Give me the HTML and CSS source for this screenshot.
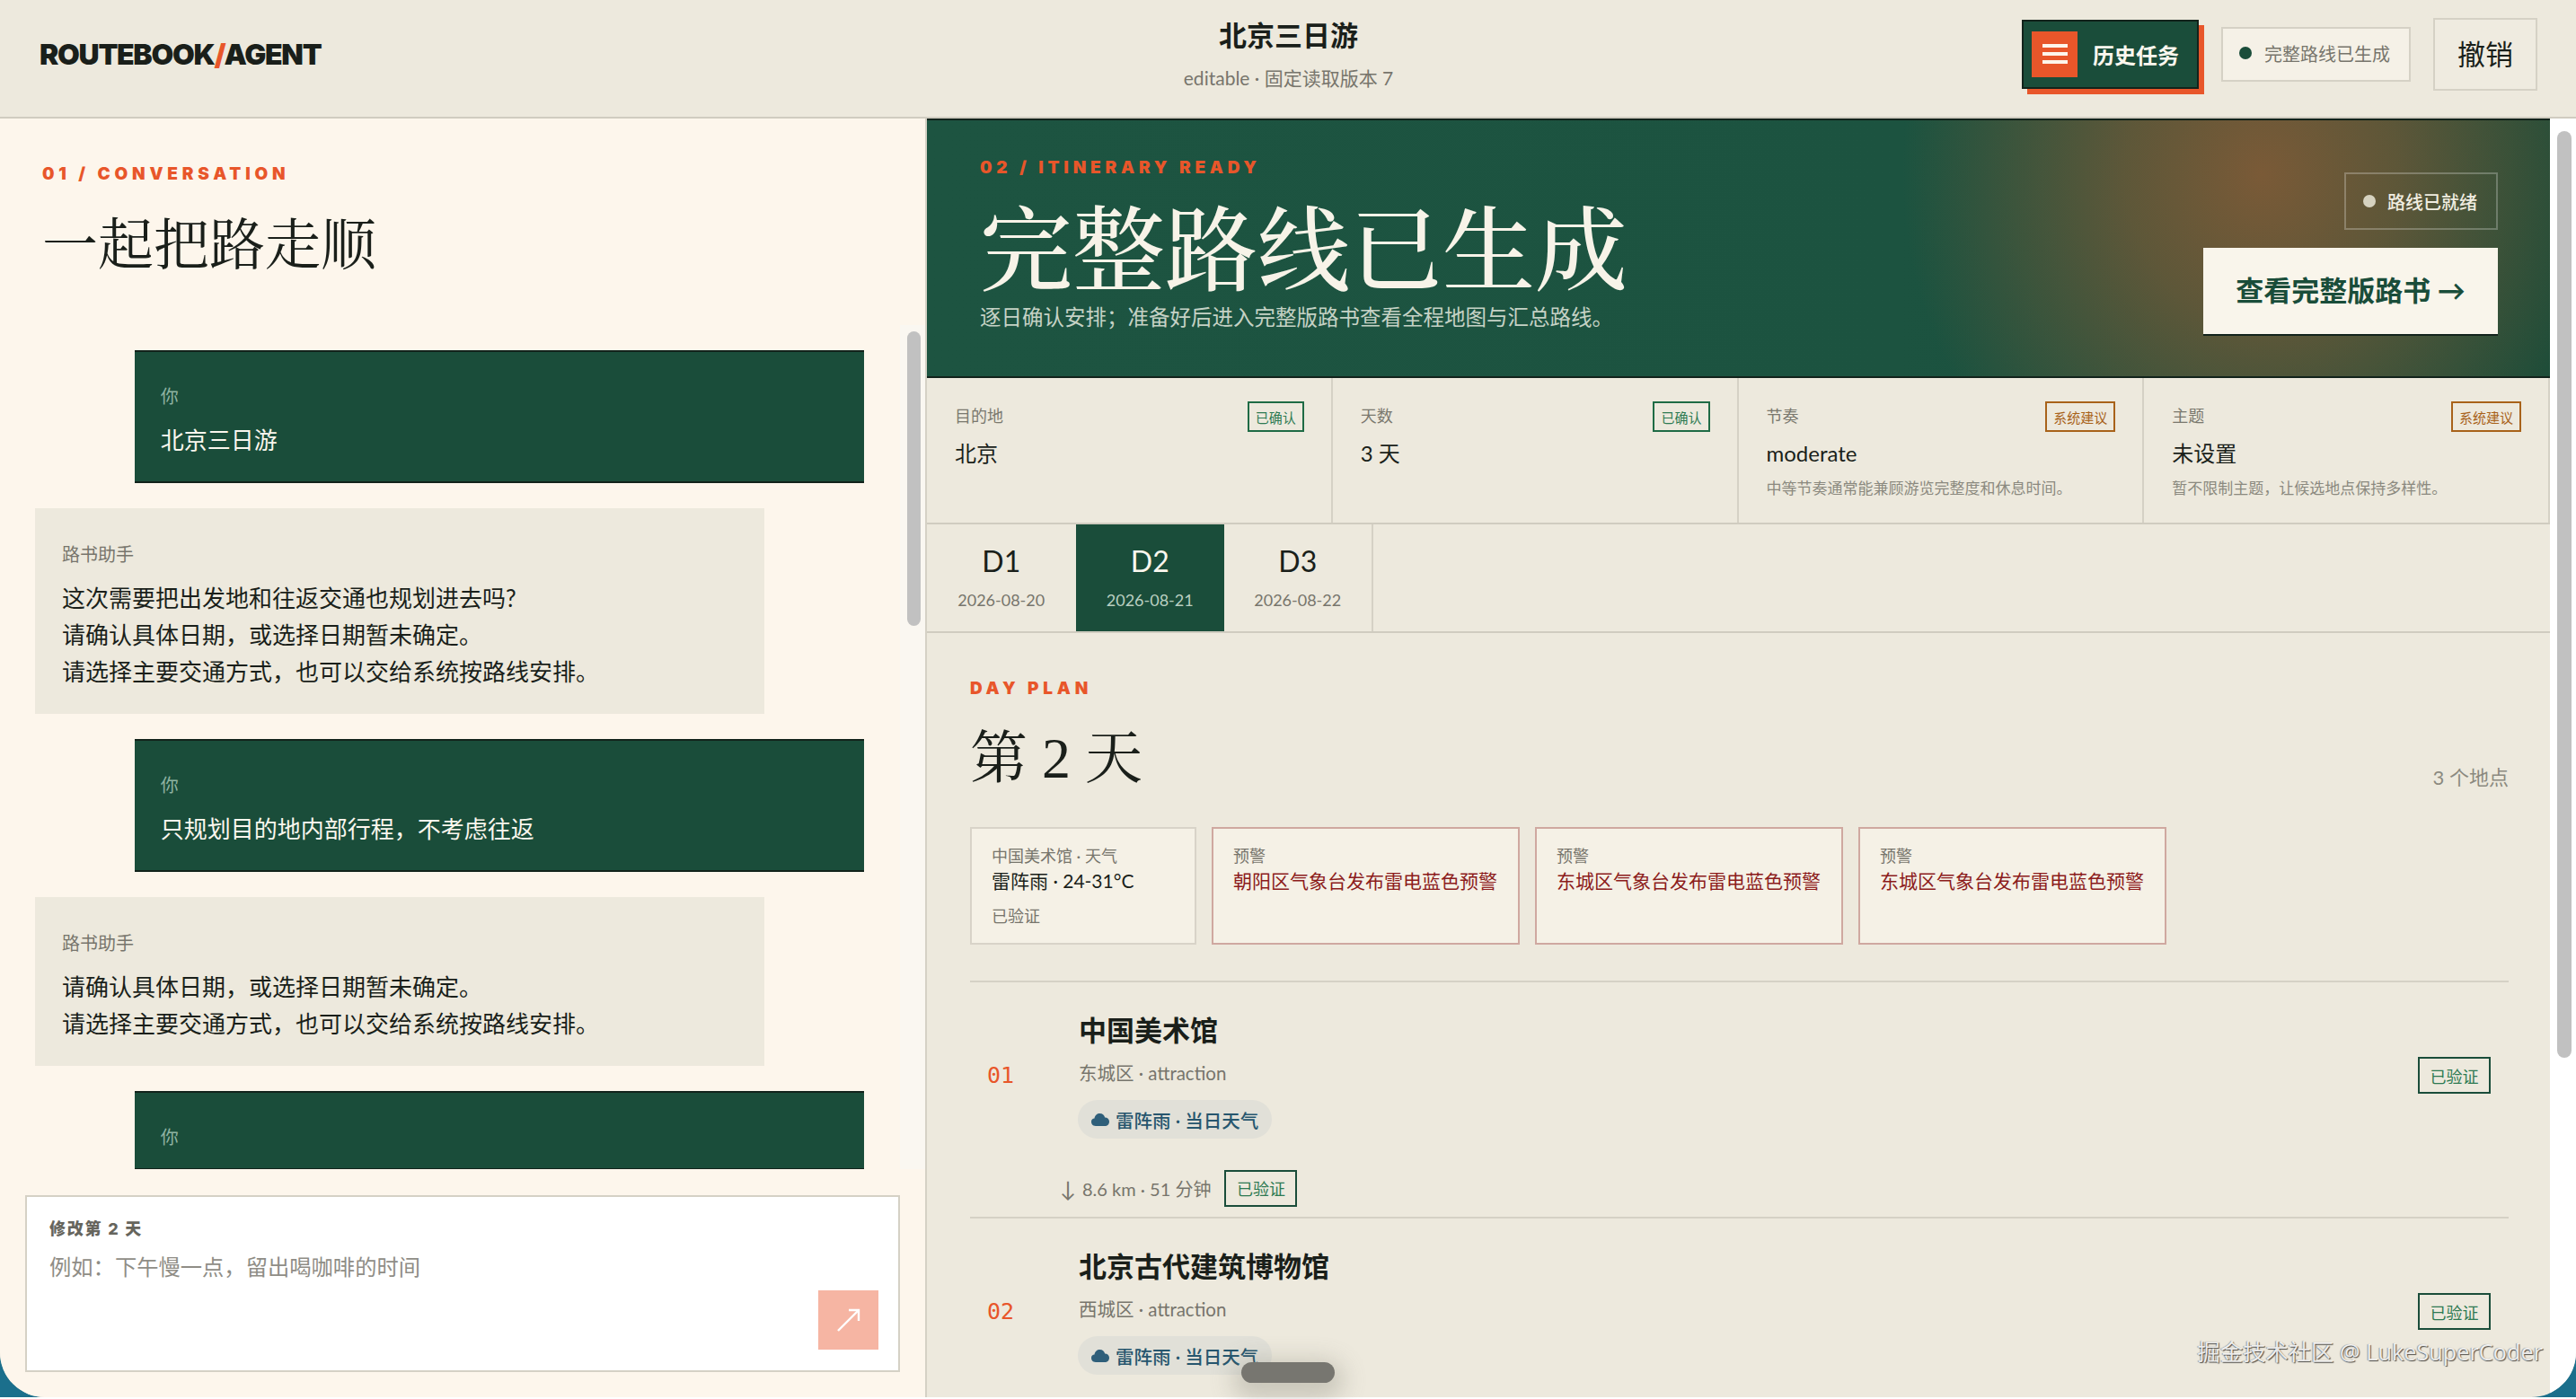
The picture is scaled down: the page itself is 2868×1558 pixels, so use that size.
FILE: index.html
```html
<!DOCTYPE html>
<html lang="zh-CN">
<head>
    <meta charset="UTF-8">
    <meta name="viewport" content="width=device-width, initial-scale=1.0">
    <title>北京三日游</title>
    <link rel="stylesheet" href="styles.css">
</head>
<body>
<div class="window">
    <div class="app">
        <!-- 顶部栏 -->
        <header class="topbar">
            <div class="logo">ROUTEBOOK<span class="slash">/</span>AGENT</div>
            <div class="title-box">
                <div class="trip-title">北京三日游</div>
                <div class="trip-sub">editable · 固定读取版本 7</div>
            </div>
            <div class="actions">
                <button class="history-btn">
                    <span class="menu-icon"><i></i><i></i><i></i></span>
                    <span>历史任务</span>
                </button>
                <div class="status"><span class="dot"></span>完整路线已生成</div>
                <button class="undo-btn">撤销</button>
            </div>
        </header>

        <main class="main">
            <!-- 左侧对话 -->
            <section class="chat">
                <div class="chat-head">
                    <div class="eyebrow">01 / CONVERSATION</div>
                    <h1 class="chat-title">一起把路走顺</h1>
                </div>
                <div class="chat-body">
                    <div class="messages">
                        <div class="msg user">
                            <div class="who">你</div>
                            <p>北京三日游</p>
                        </div>
                        <div class="msg bot">
                            <div class="who">路书助手</div>
                            <p>这次需要把出发地和往返交通也规划进去吗?</p>
                            <p>请确认具体日期，或选择日期暂未确定。</p>
                            <p>请选择主要交通方式，也可以交给系统按路线安排。</p>
                        </div>
                        <div class="msg user">
                            <div class="who">你</div>
                            <p>只规划目的地内部行程，不考虑往返</p>
                        </div>
                        <div class="msg bot">
                            <div class="who">路书助手</div>
                            <p>请确认具体日期，或选择日期暂未确定。</p>
                            <p>请选择主要交通方式，也可以交给系统按路线安排。</p>
                        </div>
                        <div class="msg user cut">
                            <div class="who">你</div>
                        </div>
                    </div>
                    <div class="track chat-track"><div class="thumb"></div></div>
                </div>
                <div class="composer-wrap">
                    <form class="composer">
                        <label class="composer-label" for="edit">修改第 2 天</label>
                        <textarea id="edit" class="composer-input" placeholder="例如：下午慢一点，留出喝咖啡的时间"></textarea>
                        <button class="send-btn" type="button">
                            <svg width="30" height="30" viewBox="0 0 30 30" fill="none" stroke="#fff" stroke-width="2.4">
                                <path d="M3 27 L26 4"/>
                                <path d="M15 4 H26 V16"/>
                            </svg>
                        </button>
                    </form>
                </div>
            </section>

            <!-- 右侧路线 -->
            <section class="route">
                <div class="route-content">
                    <div class="hero">
                        <div class="hero-left">
                            <div class="eyebrow">02 / ITINERARY READY</div>
                            <h1 class="hero-title">完整路线已生成</h1>
                            <p class="hero-sub">逐日确认安排；准备好后进入完整版路书查看全程地图与汇总路线。</p>
                        </div>
                        <div class="hero-right">
                            <div class="ready-chip"><span class="dot"></span>路线已就绪</div>
                            <a class="cta">查看完整版路书 →</a>
                        </div>
                    </div>

                    <div class="facts">
                        <div class="fact">
                            <div class="fact-top"><span class="fact-label">目的地</span><span class="tag ok">已确认</span></div>
                            <div class="fact-value">北京</div>
                        </div>
                        <div class="fact">
                            <div class="fact-top"><span class="fact-label">天数</span><span class="tag ok">已确认</span></div>
                            <div class="fact-value">3 天</div>
                        </div>
                        <div class="fact">
                            <div class="fact-top"><span class="fact-label">节奏</span><span class="tag hint">系统建议</span></div>
                            <div class="fact-value">moderate</div>
                            <div class="fact-note">中等节奏通常能兼顾游览完整度和休息时间。</div>
                        </div>
                        <div class="fact">
                            <div class="fact-top"><span class="fact-label">主题</span><span class="tag hint">系统建议</span></div>
                            <div class="fact-value">未设置</div>
                            <div class="fact-note">暂不限制主题，让候选地点保持多样性。</div>
                        </div>
                    </div>

                    <div class="tabs">
                        <div class="tab"><div class="tab-day">D1</div><div class="tab-date">2026-08-20</div></div>
                        <div class="tab active"><div class="tab-day">D2</div><div class="tab-date">2026-08-21</div></div>
                        <div class="tab"><div class="tab-day">D3</div><div class="tab-date">2026-08-22</div></div>
                    </div>

                    <div class="plan">
                        <div class="eyebrow">DAY PLAN</div>
                        <div class="plan-head">
                            <h2 class="plan-title">第 2 天</h2>
                            <span class="plan-count">3 个地点</span>
                        </div>

                        <div class="notices">
                            <div class="notice weather">
                                <div class="notice-label">中国美术馆 · 天气</div>
                                <div class="notice-text">雷阵雨 · 24-31°C</div>
                                <div class="notice-foot">已验证</div>
                            </div>
                            <div class="notice alert">
                                <div class="notice-label">预警</div>
                                <div class="notice-text">朝阳区气象台发布雷电蓝色预警</div>
                            </div>
                            <div class="notice alert">
                                <div class="notice-label">预警</div>
                                <div class="notice-text">东城区气象台发布雷电蓝色预警</div>
                            </div>
                            <div class="notice alert">
                                <div class="notice-label">预警</div>
                                <div class="notice-text">东城区气象台发布雷电蓝色预警</div>
                            </div>
                        </div>

                        <div class="stop">
                            <div class="stop-row">
                                <div class="stop-no">01</div>
                                <div class="stop-body">
                                    <div class="stop-name">中国美术馆</div>
                                    <div class="stop-meta">东城区 · attraction</div>
                                    <div class="pill">
                                        <svg width="20" height="16" viewBox="0 0 20 16" fill="#2f5f7a"><path d="M5 15 C1 15 0 12 0 10 C0 8 1.500 6.500 3.500 6.500 C4 3 6.500 1 9.500 1 C12.500 1 14.500 3 15.200 5.500 C18 5.500 20 7.500 20 10 C20 13 18 15 15 15 Z"/></svg>
                                        <span>雷阵雨 · 当日天气</span>
                                    </div>
                                </div>
                                <span class="tag ok big">已验证</span>
                            </div>
                            <div class="transit">
                                <span class="down">↓</span>
                                <span>8.6 km · 51 分钟</span>
                                <span class="tag ok big">已验证</span>
                            </div>
                        </div>

                        <div class="stop">
                            <div class="stop-row">
                                <div class="stop-no">02</div>
                                <div class="stop-body">
                                    <div class="stop-name">北京古代建筑博物馆</div>
                                    <div class="stop-meta">西城区 · attraction</div>
                                    <div class="pill">
                                        <svg width="20" height="16" viewBox="0 0 20 16" fill="#2f5f7a"><path d="M5 15 C1 15 0 12 0 10 C0 8 1.500 6.500 3.500 6.500 C4 3 6.500 1 9.500 1 C12.500 1 14.500 3 15.200 5.500 C18 5.500 20 7.500 20 10 C20 13 18 15 15 15 Z"/></svg>
                                        <span>雷阵雨 · 当日天气</span>
                                    </div>
                                </div>
                                <span class="tag ok big">已验证</span>
                            </div>
                        </div>
                    </div>
                </div>
                <div class="track route-track"><div class="thumb"></div></div>
            </section>
        </main>
    </div>

    <!-- 浮层：录屏指示条和水印 -->
    <div class="home-bar"></div>
    <div class="watermark">掘金技术社区 @ LukeSuperCoder</div>
</div>
</body>
</html>
```

FILE: styles.css
```css
*{
    margin: 0;
    padding: 0;
    box-sizing: border-box;
}
body{
    height: 1558px;
    overflow: hidden;
    background: #fff;
    color: #1a1f1a;
    font-family: Lato, "Noto Sans CJK SC", sans-serif;
}
button, textarea{
    font-family: inherit;
}
.window{
    height: 1556px;
    position: relative;
    background: #1b6f8c;
}
.app{
    height: 100%;
    display: flex;
    flex-direction: column;
    overflow: hidden;
    border-radius: 0 0 50px 50px;
    background: #ede9dd;
}

/* 顶部栏 */
.topbar{
    height: 132px;
    flex: none;
    display: grid;
    grid-template-columns: 1fr auto 1fr;
    align-items: center;
    padding: 0 43px 10px 44px;
    background: #ede9dd;
    border-bottom: 2px solid #d0ccc0;
}
.logo{
    font-family: Inter, sans-serif;
    font-size: 32px;
    font-weight: 900;
    letter-spacing: -1.3px;
    color: #1a1f1a;
}
.slash{
    color: #e8562a;
}
.title-box{
    text-align: center;
}
.trip-title{
    font-size: 31px;
    font-weight: 700;
    line-height: 40px;
}
.trip-sub{
    margin-top: 14px;
    font-size: 21px;
    line-height: 28px;
    color: #77756c;
}
.actions{
    display: flex;
    justify-content: flex-end;
    align-items: center;
    gap: 25px;
}
.history-btn{
    width: 197px;
    height: 77px;
    display: flex;
    align-items: center;
    gap: 17px;
    padding-left: 9px;
    border: 2px solid #12231b;
    background: #1a4d3a;
    box-shadow: 6px 6px 0 #e8562a;
    color: #fbf7ee;
    font-size: 24px;
    font-weight: 700;
}
.menu-icon{
    width: 51px;
    height: 51px;
    display: flex;
    flex-direction: column;
    justify-content: center;
    align-items: center;
    gap: 5px;
    background: #e8562a;
}
.menu-icon i{
    width: 28px;
    height: 4px;
    background: #fdf6ec;
}
.status{
    width: 211px;
    height: 61px;
    display: flex;
    align-items: center;
    gap: 14px;
    padding-left: 18px;
    padding-bottom: 2px;
    border: 2px solid #d5d1c5;
    background: #f5f1e7;
    font-size: 20px;
    color: #77756c;
}
.dot{
    width: 14px;
    height: 14px;
    border-radius: 50%;
    background: #1a4d3a;
}
.undo-btn{
    width: 116px;
    height: 81px;
    padding-bottom: 3px;
    border: 2px solid #d5d1c5;
    background: #efebe0;
    color: #1a1f1a;
    font-size: 31px;
}

.main{
    flex: 1;
    min-height: 0;
    display: flex;
}
.eyebrow{
    font-family: Inter, sans-serif;
    font-size: 19px;
    line-height: 20px;
    font-weight: 900;
    letter-spacing: 4.8px;
    color: #e8562a;
}

/* 左侧对话 */
.chat{
    width: 1032px;
    flex: none;
    display: flex;
    flex-direction: column;
    background: #fdf6ec;
    border-right: 2px solid #d5d1c5;
}
.chat-head{
    height: 230px;
    flex: none;
    padding: 52px 0 0 47px;
}
.chat-title{
    margin-top: 26px;
    font-family: "Noto Serif CJK SC", "Noto Sans CJK SC", serif;
    font-size: 62px;
    line-height: 78px;
    font-weight: 400;
}
.chat-body{
    flex: 1;
    min-height: 0;
    display: flex;
}
.messages{
    flex: 1;
    min-width: 0;
    display: flex;
    flex-direction: column;
    gap: 28px;
    padding: 28px 40px 0 39px;
    overflow: hidden;
}
.msg{
    width: 88%;
    flex: none;
    padding: 37px 30px 26px;
    font-size: 26px;
    line-height: 41px;
}
.msg .who{
    margin-bottom: 15px;
    font-size: 20px;
    line-height: 28px;
}
.msg.user{
    align-self: flex-end;
    padding-left: 29px;
    padding-top: 35px;
    padding-bottom: 25px;
    background: #1a4d3a;
    border-top: 2px solid #12231b;
    border-bottom: 2px solid #12231b;
    color: #fbf7ee;
}
.msg.user .who{
    color: #8fb3a2;
}
.msg.bot{
    background: #ede9dd;
}
.msg.bot .who{
    color: #77756c;
}
.msg.cut{
    height: 88px;
}
.track{
    flex: none;
    background: #faf7f1;
}
.thumb{
    background: #c1c1c1;
    border-radius: 8px;
}
.chat-track{
    width: 28px;
    padding: 7px 5px 0 8px;
}
.chat-track .thumb{
    height: 328px;
}
.composer-wrap{
    flex: none;
    padding: 29px 28px 28px;
}
.composer{
    height: 197px;
    display: flex;
    flex-direction: column;
    padding: 25px 22px 0 25px;
    background: #fff;
    border: 2px solid #d5d1c5;
}
.composer-label{
    font-family: Inter, "Noto Sans CJK SC", sans-serif;
    font-size: 18px;
    line-height: 22px;
    font-weight: 800;
    letter-spacing: 1.8px;
    color: #66655d;
}
.composer-input{
    height: 32px;
    margin-top: 15px;
    border: none;
    outline: none;
    resize: none;
    font-size: 24.300px;
    line-height: 32px;
    color: #1a1f1a;
}
.composer-input::placeholder{
    color: #8f8d86;
    opacity: 1;
}
.send-btn{
    width: 67px;
    height: 66px;
    margin-top: 10px;
    align-self: flex-end;
    display: flex;
    justify-content: center;
    align-items: center;
    border: none;
    background: #f6b5a3;
}

/* 右侧路线 */
.route{
    flex: 1;
    min-width: 0;
    display: flex;
}
.route-content{
    flex: 1;
    min-width: 0;
    overflow: hidden;
}
.route-track{
    width: 29px;
    padding: 14px 5px 0 8px;
    background: #fff;
}
.route-track .thumb{
    height: 1032px;
}
.hero{
    height: 289px;
    display: flex;
    justify-content: space-between;
    padding: 0 58px 0 59px;
    border-top: 2px solid #12231b;
    border-bottom: 2px solid #12231b;
    background: radial-gradient(ellipse 400px 440px at 1486px 60px, #7a5a37 0%, rgba(122, 90, 55, 0.7) 38%, rgba(122, 90, 55, 0) 100%), linear-gradient(90deg, #1d5441 0%, #1c5340 60%, #184c39 100%);
}
.hero-left{
    padding-top: 43px;
}
.hero-title{
    margin-top: 19px;
    font-family: "Noto Serif CJK SC", "Noto Sans CJK SC", serif;
    font-size: 103px;
    line-height: 110px;
    font-weight: 500;
    color: #f7f3e8;
}
.hero-sub{
    margin-top: 11px;
    font-size: 23.500px;
    line-height: 32px;
    color: #c5d2c5;
}
.hero-right{
    display: flex;
    flex-direction: column;
    align-items: flex-end;
    gap: 20px;
    padding-top: 58px;
}
.ready-chip{
    width: 171px;
    height: 64px;
    display: flex;
    align-items: center;
    gap: 13px;
    padding-left: 19px;
    border: 2px solid rgba(255, 255, 255, 0.25);
    font-size: 20px;
    font-weight: 500;
    color: #f0ede0;
}
.ready-chip .dot{
    background: #d6d2c0;
}
.cta{
    width: 328px;
    height: 98px;
    display: flex;
    justify-content: center;
    align-items: center;
    padding-bottom: 6px;
    background: #f9f5eb;
    border-bottom: 2px solid #12231b;
    font-size: 31px;
    font-weight: 700;
    color: #1a4d3a;
}

.facts{
    display: grid;
    grid-template-columns: repeat(4, 1fr);
    border-bottom: 2px solid #d0ccc0;
}
.fact{
    height: 161px;
    padding: 26px 30px 0 31px;
    border-right: 2px solid #d5d1c5;
}
.fact-top{
    display: flex;
    justify-content: space-between;
    align-items: flex-start;
}
.fact-label{
    padding-top: 4px;
    font-size: 18px;
    line-height: 24px;
    color: #7a786e;
}
.tag{
    display: inline-flex;
    justify-content: center;
    align-items: center;
    height: 34px;
    padding: 0 7px;
    border: 2px solid #1f6b45;
    font-size: 15px;
    color: #2d7a52;
}
.tag.hint{
    border-color: #a8621a;
    color: #a8621a;
}
.tag.big{
    width: 81px;
    height: 41px;
    padding: 0;
    border-color: #1a4d3a;
    font-size: 18px;
    flex: none;
}
.fact-value{
    margin-top: 8px;
    font-size: 24px;
    line-height: 32px;
}
.fact-note{
    margin-top: 11px;
    font-size: 17px;
    line-height: 24px;
    color: #8b897f;
}

.tabs{
    display: flex;
    border-bottom: 2px solid #d0ccc0;
}
.tab{
    width: 165.500px;
    height: 119px;
    padding-top: 21px;
    text-align: center;
}
.tab:last-child{
    border-right: 2px solid #d5d1c5;
}
.tab-day{
    font-size: 32px;
    line-height: 40px;
}
.tab-date{
    margin-top: 11px;
    font-size: 18px;
    line-height: 24px;
    color: #77756c;
}
.tab.active{
    background: #1a4d3a;
    color: #fbf7ee;
}
.tab.active .tab-date{
    color: #b9cfc0;
}

.plan{
    padding: 52px 46px 0 48px;
}
.plan-head{
    display: flex;
    justify-content: space-between;
    align-items: flex-end;
    margin-top: 31px;
}
.plan-title{
    font-family: "Liberation Serif", "Noto Serif CJK SC", "Noto Sans CJK SC", serif;
    font-size: 64px;
    line-height: 74px;
    font-weight: 400;
}
.plan-count{
    margin-bottom: 2px;
    font-size: 22px;
    line-height: 28px;
    color: #8b897f;
}
.notices{
    display: flex;
    gap: 17px;
    margin-top: 39px;
}
.notice{
    height: 131px;
    padding: 18px 22px 0;
    background: #f5f1e6;
    border: 2px solid #cfa8a0;
}
.notice.weather{
    width: 252px;
    border-color: #d8d3c8;
}
.notice.alert{
    width: 343px;
}
.notice-label{
    font-size: 18px;
    line-height: 24px;
    color: #77756c;
}
.notice-text{
    margin-top: 1px;
    font-size: 21px;
    line-height: 30px;
}
.alert .notice-text{
    color: #8c1c1c;
}
.notice-foot{
    margin-top: 12px;
    font-size: 18px;
    line-height: 24px;
    color: #77756c;
}

.stop{
    margin-top: 40px;
    border-top: 2px solid #d5d1c5;
}
.stop + .stop{
    margin-top: 11px;
}
.stop-row{
    display: flex;
    align-items: center;
    padding: 33px 20px 0 0;
}
.stop-no{
    width: 121px;
    flex: none;
    padding-left: 19px;
    font-family: "DejaVu Sans Mono", monospace;
    font-size: 25px;
    color: #e8562a;
}
.stop-body{
    flex: 1;
    min-width: 0;
}
.stop-name{
    font-size: 31px;
    line-height: 40px;
    font-weight: 700;
}
.stop-meta{
    margin-top: 14px;
    font-size: 20.500px;
    line-height: 28px;
    color: #77756c;
}
.pill{
    width: 216px;
    height: 43px;
    display: flex;
    align-items: center;
    gap: 7px;
    margin-top: 16px;
    margin-left: -1px;
    padding-left: 15px;
    border-radius: 22px;
    background: #e1e0d8;
    font-size: 20.500px;
    font-weight: 500;
    color: #26566e;
}
.transit{
    height: 42px;
    display: flex;
    align-items: center;
    gap: 15px;
    margin-top: 34px;
    padding-left: 100px;
    font-size: 20px;
    color: #77756c;
}
.transit .down{
    margin-right: -8px;
    font-size: 24px;
}

/* 浮层 */
.home-bar{
    position: absolute;
    left: 1382px;
    top: 1517px;
    width: 104px;
    height: 23px;
    border-radius: 12px;
    background: #777670;
    box-shadow: 0 8px 26px 10px rgba(120, 118, 105, 0.3);
}
.watermark{
    position: absolute;
    right: 37px;
    top: 1488px;
    font-family: "Open Sans", "Noto Sans CJK SC", sans-serif;
    font-size: 25.300px;
    line-height: 34px;
    color: rgba(255, 255, 255, 0.88);
    text-shadow: 1px 1px 1px rgba(0, 0, 0, 0.65), -1px 0 1px rgba(0, 0, 0, 0.35);
}
```
